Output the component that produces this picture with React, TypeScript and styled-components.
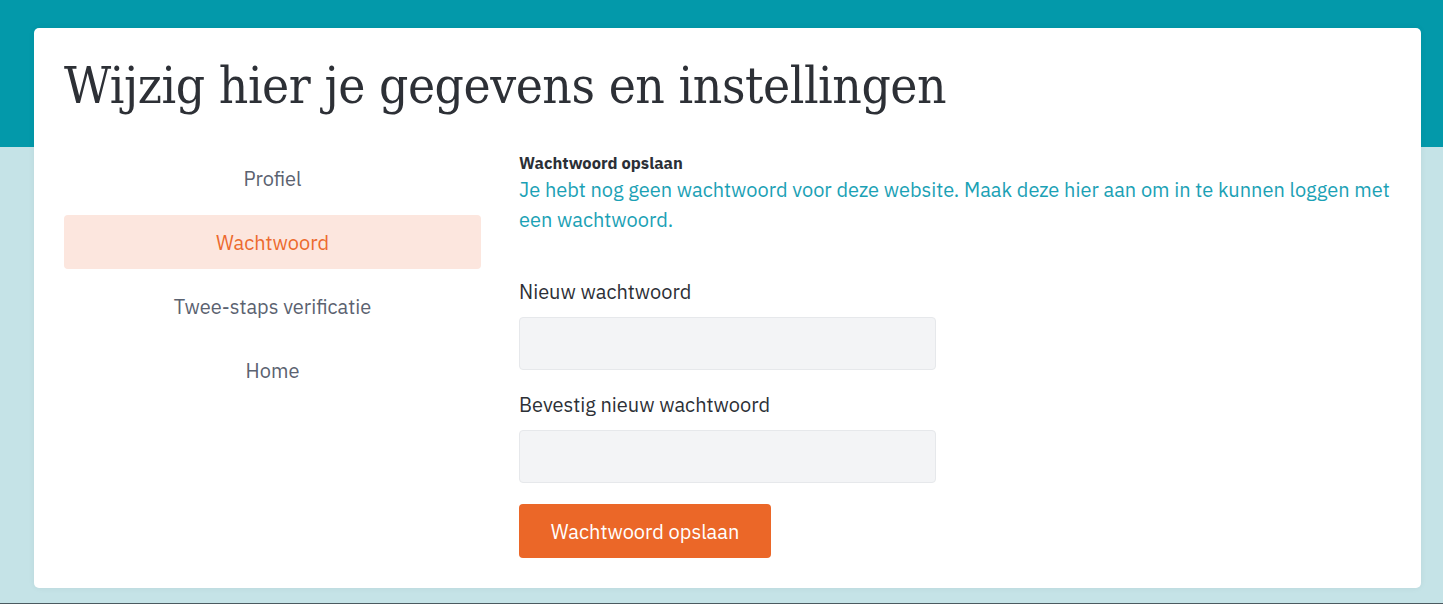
import React from "react";
import styled, { createGlobalStyle } from "styled-components";

const Global = createGlobalStyle`
  html, body { margin: 0; padding: 0; }
  body {
    background: #c5e3e7;
    font-family: "IBM Plex Sans", "Noto Sans", "Liberation Sans", sans-serif;
  }
`;

const Page = styled.div`
  min-height: 604px;
  box-sizing: border-box;
  background: linear-gradient(to bottom, #0399aa 0, #0399aa 147px, #c5e3e7 147px, #c5e3e7 100%);
  padding: 28px 22px 15px 34px;
  border-bottom: 1px solid #4b5a60;
`;

const Card = styled.div`
  background: #ffffff;
  border-radius: 5px;
  height: 560px;
  box-sizing: border-box;
  padding: 26px 30px 0 30px;
  box-shadow: 0 0 6px rgba(0, 0, 0, 0.06);
`;

const Title = styled.h1`
  margin: 0;
  font-family: "DejaVu Serif Condensed", "DejaVu Serif", "Liberation Serif", serif;
  font-stretch: semi-condensed;
  font-weight: 400;
  font-size: 51px;
  line-height: 63px;
  color: #2d3036;
  letter-spacing: -0.45px;
`;

const Columns = styled.div`
  display: grid;
  grid-template-columns: 417px 1fr;
  column-gap: 38px;
  margin-top: 36px;
`;

const Nav = styled.nav`
  display: flex;
  flex-direction: column;
  gap: 10px;
  margin-top: -2px;
`;

const NavItem = styled.a<{ $active?: boolean }>`
  display: flex;
  align-items: center;
  justify-content: center;
  height: 54px;
  border-radius: 4px;
  font-size: 20px;
  text-decoration: none;
  color: ${(p) => (p.$active ? "#ec6a2e" : "#5b6270")};
  background: ${(p) => (p.$active ? "#fce6de" : "transparent")};
`;

const Content = styled.div`
  display: flex;
  flex-direction: column;
`;

const SectionTitle = styled.div`
  font-size: 16.5px;
  font-weight: 700;
  line-height: 20px;
  color: #2b2f36;
`;

const Intro = styled.p`
  margin: 2px 0 0 0;
  font-size: 20px;
  line-height: 30px;
  color: #1ba1b5;
`;

const Label = styled.label`
  display: block;
  font-size: 20px;
  line-height: 26px;
  color: #2d3036;
  margin-bottom: 12px;
`;

const Field = styled.div<{ $top: number }>`
  margin-top: ${(p) => p.$top}px;
`;

const Input = styled.input`
  display: block;
  width: 417px;
  height: 53px;
  box-sizing: border-box;
  background: #f3f4f6;
  border: 1.5px solid #e6e8eb;
  border-radius: 4px;
  outline: none;
`;

const Button = styled.button`
  margin-top: 21px;
  align-self: flex-start;
  width: 252px;
  height: 54px;
  border: none;
  border-radius: 4px;
  background: #eb6728;
  color: #ffffff;
  font-family: inherit;
  font-size: 20px;
  cursor: pointer;
`;

export default function App() {
  return (
    <>
      <Global />
      <Page>
        <Card>
          <Title>Wijzig hier je gegevens en instellingen</Title>
          <Columns>
            <Nav>
              <NavItem href="#">Profiel</NavItem>
              <NavItem href="#" $active>
                Wachtwoord
              </NavItem>
              <NavItem href="#">Twee-staps verificatie</NavItem>
              <NavItem href="#">Home</NavItem>
            </Nav>
            <Content>
              <SectionTitle>Wachtwoord opslaan</SectionTitle>
              <Intro>
                Je hebt nog geen wachtwoord voor deze website. Maak deze hier aan om in te kunnen loggen met een
                wachtwoord.
              </Intro>
              <Field $top={44}>
                <Label>Nieuw wachtwoord</Label>
                <Input type="password" />
              </Field>
              <Field $top={22}>
                <Label>Bevestig nieuw wachtwoord</Label>
                <Input type="password" />
              </Field>
              <Button>Wachtwoord opslaan</Button>
            </Content>
          </Columns>
        </Card>
      </Page>
    </>
  );
}
